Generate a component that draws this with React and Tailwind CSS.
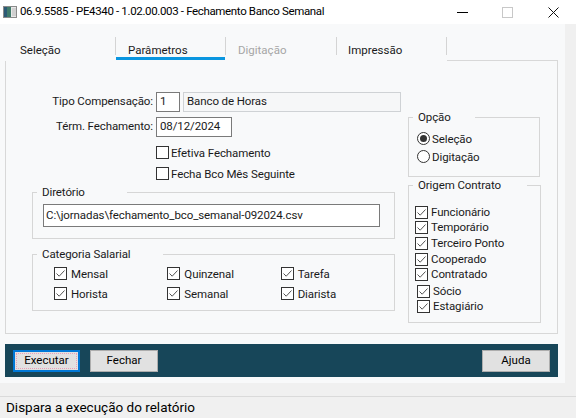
import React from "react";

const font = { fontFamily: 'Roboto, "Liberation Sans", Arial, sans-serif' };

function CheckBox({ checked = false }) {
  return (
    <span className="w-[13px] h-[13px] border border-[#333333] bg-white flex items-center justify-center shrink-0">
      {checked && (
        <svg width="11" height="11" viewBox="0 0 11 11">
          <path d="M1.5 5.5 L4.2 8.2 L9.5 2.5" fill="none" stroke="#555555" strokeWidth="1" />
        </svg>
      )}
    </span>
  );
}

function Radio({ checked = false }) {
  return (
    <span className="w-[13px] h-[13px] rounded-full border border-[#333333] bg-white flex items-center justify-center shrink-0">
      {checked && <span className="w-[7px] h-[7px] rounded-full bg-[#333333]" />}
    </span>
  );
}

function GroupBox({ title, legendW, className, children }) {
  return (
    <div className={`relative border border-[#d6d6d6] ${className}`}>
      <span className={`absolute -top-[9px] left-[4px] bg-[#f8f9fa] pl-[5px] leading-[16px] text-[11.5px] tracking-[-0.1px] text-[#1a1a1a] ${legendW}`}>
        {title}
      </span>
      {children}
    </div>
  );
}

function Button({ children, focused = false }) {
  if (focused) {
    return (
      <div className="w-[67px] h-[22px] border-2 border-[#0078d7] bg-[#e1e1e1] p-[1px]">
        <div className="w-full h-full border border-dotted border-[#e8a0b8] flex items-center justify-center text-[11.5px] text-black">
          {children}
        </div>
      </div>
    );
  }
  return (
    <div className="w-[68px] h-[22px] border border-[#adadad] bg-[#e1e1e1] flex items-center justify-center text-[11.5px] text-black">
      {children}
    </div>
  );
}

const categorias = [
  ["Mensal", "Horista"],
  ["Quinzenal", "Semanal"],
  ["Tarefa", "Diarista"],
];

const origens = [
  { label: "Funcionário", mt: "mt-0", ml: "ml-0" },
  { label: "Temporário", mt: "mt-[2px]", ml: "ml-0" },
  { label: "Terceiro Ponto", mt: "mt-[3px]", ml: "ml-0" },
  { label: "Cooperado", mt: "mt-[3px]", ml: "ml-0" },
  { label: "Contratado", mt: "mt-[2px]", ml: "ml-0" },
  { label: "Sócio", mt: "mt-[4px]", ml: "ml-[2px]" },
  { label: "Estagiário", mt: "mt-[2px]", ml: "ml-[2px]" },
];

export default function App() {
  return (
    <div className="w-[576px] h-[418px] bg-[#f0f0f0] flex flex-col overflow-hidden text-[#1a1a1a]" style={font}>
      {/* barra de título */}
      <div className="h-[24px] bg-white flex items-center shrink-0">
        <svg className="ml-[3px]" width="14" height="12" viewBox="0 0 14 12">
          <rect x="0.5" y="0.5" width="13" height="11" fill="#e8e8e8" stroke="#8a8a8a" />
          <rect x="1" y="1" width="7" height="10" fill="#3f7a6a" />
          <rect x="1" y="1" width="3" height="10" fill="#2c5a75" />
          <rect x="9" y="2" width="4" height="8" fill="#d0d0d0" />
        </svg>
        <span className="ml-[3px] text-[11.5px] tracking-[-0.35px] text-black">
          06.9.5585 - PE4340 - 1.02.00.003 - Fechamento Banco Semanal
        </span>
        <div className="ml-auto flex items-center h-full">
          <span className="w-[11px] h-px bg-black mr-[34px]" />
          <span className="w-[11px] h-[11px] border border-[#c8c8c8] mr-[35px]" />
          <svg className="mr-[17px]" width="11" height="11" viewBox="0 0 11 11">
            <path d="M0.5 0.5 L10.5 10.5 M10.5 0.5 L0.5 10.5" stroke="#111" strokeWidth="1" />
          </svg>
        </div>
      </div>

      {/* área principal */}
      <div className="flex shrink-0">
        <div className="w-[565px] h-[359px] bg-[#f8f9fa] flex flex-col">
          {/* abas */}
          <div className="h-[37px] flex ml-[5px] text-[11.5px] leading-[14px]">
            <div className="w-[110px] flex flex-col">
              <div className="flex-1 flex items-end pl-[15px]">Seleção</div>
              <div className="h-[4px]" />
            </div>
            <span className="w-px h-[18px] bg-[#d4d4d4] mt-[13px]" />
            <div className="w-[109px] flex flex-col">
              <div className="flex-1 flex items-end pl-[12px]">Parâmetros</div>
              <div className="h-[3px] bg-[#0a96e0]" />
              <div className="h-px" />
            </div>
            <span className="w-px h-[18px] bg-[#d4d4d4] mt-[13px]" />
            <div className="w-[110px] flex flex-col">
              <div className="flex-1 flex items-end pl-[12px] text-[#a6a6a6]">Digitação</div>
              <div className="h-[4px]" />
            </div>
            <span className="w-px h-[18px] bg-[#d4d4d4] mt-[13px]" />
            <div className="w-[109px] flex flex-col">
              <div className="flex-1 flex items-end pl-[11px]">Impressão</div>
              <div className="h-[4px]" />
            </div>
            <span className="w-px h-[18px] bg-[#d4d4d4] mt-[13px]" />
            <div className="w-[111px] border-b border-[#d8d8d8]" />
          </div>

          {/* quadro */}
          <div className="ml-[5px] w-[553px] h-[273px] border-l border-r border-b border-[#d8d8d8] flex text-[11.5px] tracking-[-0.1px]">
            {/* coluna esquerda */}
            <div className="w-[396px] pt-[31px] flex flex-col">
              <div className="h-[20px] flex items-center">
                <span className="w-[147px] text-right">Tipo Compensação:</span>
                <div className="ml-[3px] w-[24px] h-[20px] bg-white border border-[#7a7a7a] flex items-center pl-[3px]">1</div>
                <div className="ml-[3px] w-[218px] h-[20px] bg-[#f6f7f8] border border-[#cfd2d5] flex items-center pl-[3px]">
                  Banco de Horas
                </div>
              </div>
              <div className="mt-[5px] h-[20px] flex items-center">
                <span className="w-[147px] text-right">Térm. Fechamento:</span>
                <div className="ml-[3px] w-[76px] h-[20px] bg-white border border-[#7a7a7a] flex items-center pl-[3px]">
                  08/12/2024
                </div>
              </div>
              <div className="mt-[9px] ml-[150px] h-[13px] flex items-center leading-[14px]">
                <CheckBox />
                <span className="ml-[2px]">Efetiva Fechamento</span>
              </div>
              <div className="mt-[8px] ml-[150px] h-[13px] flex items-center leading-[14px]">
                <CheckBox />
                <span className="ml-[2px]">Fecha Bco Mês Seguinte</span>
              </div>

              <GroupBox title="Diretório" legendW="w-[90px]" className="mt-[12px] ml-[26px] w-[363px] h-[47px]">
                <div className="ml-[10px] mt-[11px] w-[337px] h-[23px] bg-white border border-[#7a7a7a] flex items-center pl-[2px]">
                  C:\jornadas\fechamento_bco_semanal-092024.csv
                </div>
              </GroupBox>

              <GroupBox title="Categoria Salarial" legendW="w-[126px]" className="mt-[15px] ml-[26px] w-[363px] h-[57px]">
                <div className="flex pl-[21px] pt-[12px]">
                  {categorias.map((col) => (
                    <div key={col[0]} className="w-[119px] flex flex-col gap-[7px]">
                      {col.map((item) => (
                        <div key={item} className="h-[13px] flex items-center leading-[14px]">
                          <CheckBox checked />
                          <span className="ml-[4px]">{item}</span>
                        </div>
                      ))}
                    </div>
                  ))}
                </div>
              </GroupBox>
            </div>

            {/* coluna direita */}
            <div className="ml-[6px] pt-[56px] flex flex-col">
              <GroupBox title="Opção" legendW="w-[62px]" className="w-[132px] h-[60px]">
                <div className="pl-[8px] pt-[14px] flex flex-col gap-[5px]">
                  <div className="h-[13px] flex items-center leading-[14px]">
                    <Radio checked />
                    <span className="ml-[2px]">Seleção</span>
                  </div>
                  <div className="h-[13px] flex items-center leading-[14px]">
                    <Radio />
                    <span className="ml-[2px]">Digitação</span>
                  </div>
                </div>
              </GroupBox>

              <GroupBox title="Origem Contrato" legendW="w-[114px]" className="mt-[8px] w-[133px] h-[138px]">
                <div className="pl-[6px] pt-[20px] flex flex-col">
                  {origens.map((o) => (
                    <div key={o.label} className={`h-[13px] flex items-center leading-[13px] ${o.mt} ${o.ml}`}>
                      <CheckBox checked />
                      <span className="ml-[3px]">{o.label}</span>
                    </div>
                  ))}
                </div>
              </GroupBox>
            </div>
          </div>

          {/* barra de botões */}
          <div className="mt-[10px] ml-[5px] w-[553px] h-[33px] bg-[#174659] flex items-center px-[8px]">
            <Button focused>Executar</Button>
            <div className="ml-[10px]">
              <Button>Fechar</Button>
            </div>
            <div className="ml-auto">
              <Button>Ajuda</Button>
            </div>
          </div>
        </div>
      </div>

      {/* barra de status */}
      <div className="h-[13px] shrink-0" />
      <div className="h-px bg-[#dadada] shrink-0" />
      <div className="h-[22px] flex items-center pl-[6px] text-[13.5px] text-black">
        Dispara a execução do relatório
      </div>
    </div>
  );
}
